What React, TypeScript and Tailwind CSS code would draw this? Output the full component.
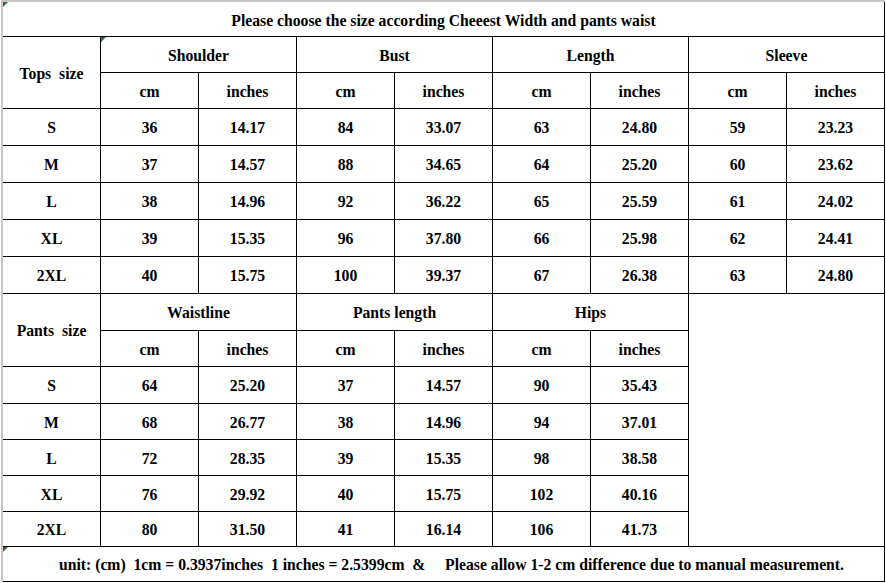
import type { ReactNode } from 'react';

const topsGroups = ['Shoulder', 'Bust', 'Length', 'Sleeve'];
const pantsGroups = ['Waistline', 'Pants length', 'Hips'];

const topsRows = [
  ['S', '36', '14.17', '84', '33.07', '63', '24.80', '59', '23.23'],
  ['M', '37', '14.57', '88', '34.65', '64', '25.20', '60', '23.62'],
  ['L', '38', '14.96', '92', '36.22', '65', '25.59', '61', '24.02'],
  ['XL', '39', '15.35', '96', '37.80', '66', '25.98', '62', '24.41'],
  ['2XL', '40', '15.75', '100', '39.37', '67', '26.38', '63', '24.80'],
];

const pantsRows = [
  ['S', '64', '25.20', '37', '14.57', '90', '35.43'],
  ['M', '68', '26.77', '38', '14.96', '94', '37.01'],
  ['L', '72', '28.35', '39', '15.35', '98', '38.58'],
  ['XL', '76', '29.92', '40', '15.75', '102', '40.16'],
  ['2XL', '80', '31.50', '41', '16.14', '106', '41.73'],
];

function Marker() {
  return (
    <span className="absolute left-0 top-0 h-0 w-0 border-t-[5px] border-r-[5px] border-t-[#2f6b3c] border-r-transparent" />
  );
}

function Cell({ children, className = '', marker = false }: { children?: ReactNode; className?: string; marker?: boolean }) {
  return (
    <div
      className={`relative flex items-center justify-center border-b border-r border-black bg-white pt-[2px] whitespace-pre ${className}`}
    >
      {marker && <Marker />}
      {children}
    </div>
  );
}

export default function App() {
  return (
    <div className="h-[583px] w-[886px] bg-white">
      <div
        className="ml-px grid w-[884px] grid-cols-[repeat(9,98px)] grid-rows-[35px_36px_36px_37px_37px_37px_37px_37px_37px_36px_37px_36px_36px_36px_35px_35px] border-l-2 border-t-2 border-[#c6c6c6] text-[15.7px] font-bold text-black"
        style={{ fontFamily: '"Liberation Serif", "Times New Roman", serif' }}
      >
        <Cell className="col-span-9 pt-[4px]" marker>
          Please choose the size according Cheeest Width and pants waist
        </Cell>

        <Cell className="row-span-2">Tops  size</Cell>
        {topsGroups.map((g, i) => (
          <Cell key={g} className="col-span-2" marker={i === 0}>
            {g}
          </Cell>
        ))}
        {topsGroups.map((g) => [
          <Cell key={`${g}-cm`}>cm</Cell>,
          <Cell key={`${g}-in`}>inches</Cell>,
        ])}
        {topsRows.map((row) =>
          row.map((v, i) => <Cell key={`t-${row[0]}-${i}`}>{v}</Cell>)
        )}

        <Cell className="row-span-2">Pants  size</Cell>
        {pantsGroups.map((g) => (
          <Cell key={g} className="col-span-2">
            {g}
          </Cell>
        ))}
        <Cell className="col-span-2 row-span-7" />
        {pantsGroups.map((g) => [
          <Cell key={`${g}-cm`}>cm</Cell>,
          <Cell key={`${g}-in`}>inches</Cell>,
        ])}
        {pantsRows.map((row) =>
          row.map((v, i) => <Cell key={`p-${row[0]}-${i}`}>{v}</Cell>)
        )}

        <Cell className="col-span-9 pl-4" marker>
          unit: (cm)  1cm = 0.3937inches  1 inches = 2.5399cm  &amp;     Please allow 1-2 cm difference due to manual measurement.
        </Cell>
      </div>
    </div>
  );
}
